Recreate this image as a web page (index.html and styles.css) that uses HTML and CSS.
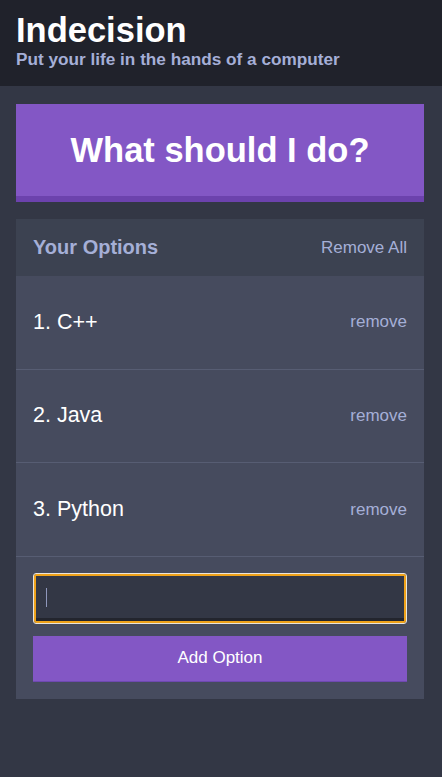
FILE: index.html
```html
<!DOCTYPE html>
<html lang="en">
<head>
<meta charset="utf-8">
<title>Indecision</title>
<link rel="stylesheet" href="styles.css">
</head>
<body>
<header class="header">
  <h1 class="header__title">Indecision</h1>
  <h2 class="header__subtitle">Put your life in the hands of a computer</h2>
</header>
<main class="container">
  <button class="big-button">What should I do?</button>
  <section class="widget">
    <div class="widget-header">
      <h3 class="widget-header__title">Your Options</h3>
      <button class="link-button">Remove All</button>
    </div>
    <div class="option">
      <p class="option__text">1. C++</p>
      <button class="link-button link-button--small">remove</button>
    </div>
    <div class="option">
      <p class="option__text">2. Java</p>
      <button class="link-button link-button--small">remove</button>
    </div>
    <div class="option">
      <p class="option__text">3. Python</p>
      <button class="link-button link-button--small">remove</button>
    </div>
    <form class="add-option">
      <div class="add-option__field">
        <input class="add-option__input" type="text" name="option">
        <span class="add-option__caret"></span>
      </div>
      <button class="button" type="button">Add Option</button>
    </form>
  </section>
</main>
</body>
</html>
```
FILE: styles.css
```css
* { box-sizing: border-box; }
html, body { margin: 0; padding: 0; }
body {
  background: #333745;
  font-family: "Liberation Sans", Arial, Helvetica, sans-serif;
  color: #fff;
  min-height: 777px;
}
.header {
  background: #20222b;
  padding: 11px 16px 17px;
}
.header__title {
  margin: 0;
  font-size: 34.5px;
  line-height: 39px;
  font-weight: 700;
  color: #fff;
}
.header__subtitle {
  margin: 0;
  font-size: 17.2px;
  line-height: 19px;
  font-weight: 700;
  color: #a5afd7;
}
.container {
  padding: 18px 18px 0 16px;
}
.big-button {
  display: block;
  width: 100%;
  margin: 0 0 17px;
  padding: 0;
  height: 98px;
  background: #8357c5;
  border: none;
  border-bottom: 6px solid #6c42ad;
  color: #fff;
  font-family: inherit;
  font-size: 34.5px;
  font-weight: 700;
}
.widget {
  background: #464b5e;
  margin: 0;
}
.widget-header {
  background: #3c4251;
  display: flex;
  justify-content: space-between;
  align-items: center;
  padding: 0 17px;
  height: 57px;
}
.widget-header__title {
  margin: 0;
  font-size: 20px;
  font-weight: 700;
  color: #a5afd7;
}
.link-button {
  background: none;
  border: none;
  padding: 0;
  color: #a5afd7;
  font-family: inherit;
  font-size: 17px;
}
.option {
  display: flex;
  justify-content: space-between;
  align-items: center;
  padding: 0 17px;
  height: 93.67px;
  border-bottom: 1px solid #575d73;
}
.option__text {
  margin: 0;
  font-size: 21.5px;
  color: #fff;
}
.add-option {
  display: flex;
  flex-direction: column;
  gap: 12px;
  padding: 16px 17px 17px;
}
.add-option__field {
  position: relative;
}
.add-option__input {
  display: block;
  width: 100%;
  height: 51px;
  margin: 0;
  padding: 0 12px;
  background: #333745;
  border: 1px solid #e9e4dc;
  border-radius: 3px;
  box-shadow: inset 0 0 0 2px #efa21a, inset 0 -5px 0 #23252e;
  color: #a5afd7;
  font-family: inherit;
  font-size: 17px;
  outline: none;
}
.add-option__caret {
  position: absolute;
  left: 13px;
  top: 15px;
  width: 1px;
  height: 19px;
  background: #8f97bb;
}
.button {
  display: block;
  width: 100%;
  height: 46px;
  margin: 0;
  background: #8357c5;
  border: none;
  border-bottom: 1px solid #6e49b0;
  color: #fff;
  font-family: inherit;
  font-size: 17px;
}
```
